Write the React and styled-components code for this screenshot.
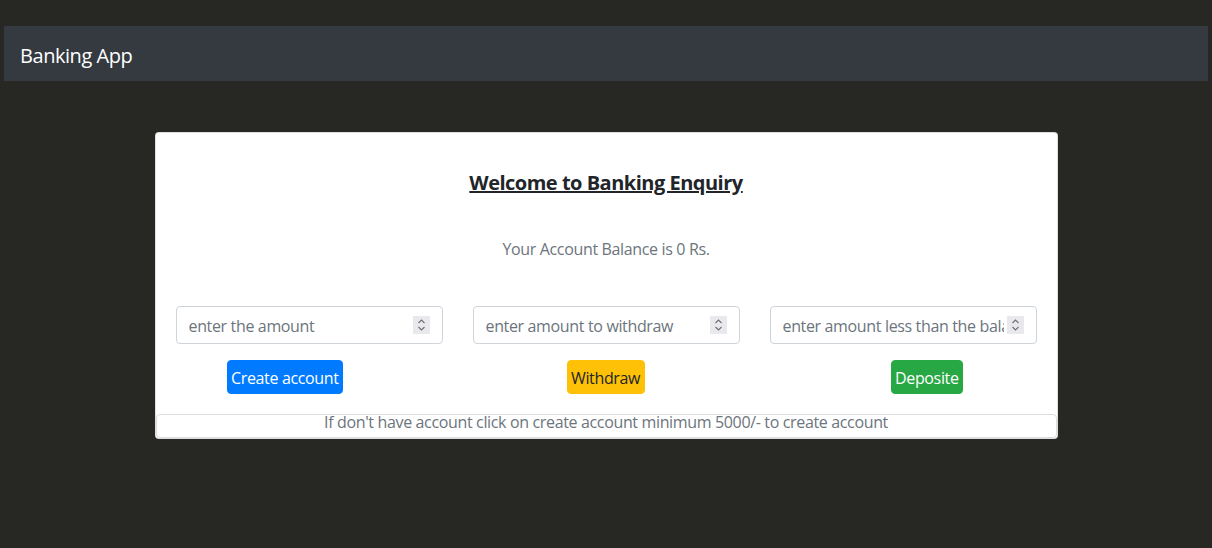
import React from 'react';
import styled, { createGlobalStyle } from 'styled-components';

const GlobalStyle = createGlobalStyle`
  html, body {
    margin: 0;
    padding: 0;
    background: #272723;
    font-family: 'Open Sans', 'Noto Sans', sans-serif;
    letter-spacing: -0.35px;
  }
  * {
    box-sizing: border-box;
  }
`;

const Page = styled.div`
  min-height: 548px;
  padding: 26px 4px 0;
`;

const Navbar = styled.nav`
  display: flex;
  align-items: center;
  height: 55px;
  padding: 4px 16px 0;
  background: #343a40;
`;

const Brand = styled.span`
  color: #ffffff;
  font-size: 20px;
  line-height: 30px;
  letter-spacing: -0.45px;
`;

const Card = styled.div`
  width: 903px;
  margin: 51px auto 0;
  background: #ffffff;
  border: 1px solid rgba(0, 0, 0, 0.125);
  border-radius: 4px;
  overflow: hidden;
`;

const CardBody = styled.div`
  padding: 38px 20px 0;
  text-align: center;
`;

const Title = styled.h5`
  margin: 0;
  font-size: 20px;
  font-weight: 700;
  line-height: 24px;
  letter-spacing: -0.5px;
  color: #212529;
  text-decoration: underline;
`;

const Balance = styled.p`
  margin: 42px 0 0;
  font-size: 16px;
  line-height: 24px;
  color: #6c757d;
`;

const Row = styled.div`
  display: grid;
  grid-template-columns: repeat(3, 1fr);
  column-gap: 30px;
  margin-top: 45px;
`;

const Column = styled.div`
  display: flex;
  flex-direction: column;
  align-items: flex-start;
`;

const Field = styled.div`
  position: relative;
  width: 100%;
`;

const Input = styled.input`
  width: 100%;
  height: 38px;
  padding: 7px 32px 5px 12px;
  border: 1px solid #ced4da;
  border-radius: 4px;
  font-family: inherit;
  font-size: 16px;
  letter-spacing: -0.35px;
  color: #495057;
  outline: none;
  &::placeholder {
    color: #6c757d;
  }
`;

const Spinner = styled.span`
  position: absolute;
  top: 10px;
  right: 13px;
  width: 17px;
  height: 18px;
  display: flex;
  align-items: center;
  justify-content: center;
  background: #e9e9ed;
`;

const ActionButton = styled.button`
  margin: 16px 0 0 ${(p) => p.$offset}px;
  height: 34px;
  padding: 1px 3.5px 0;
  border: 1px solid ${(p) => p.$bg};
  border-radius: 4px;
  background: ${(p) => p.$bg};
  color: ${(p) => p.$fg};
  font-family: inherit;
  font-size: 16px;
  line-height: 24px;
  letter-spacing: -0.35px;
  cursor: pointer;
`;

const Footer = styled.div`
  margin-top: 20px;
  height: 24px;
  border: 1px solid #dcdcdc;
  border-radius: 4px;
  text-align: center;
  font-size: 16px;
  line-height: 15px;
  color: #6c757d;
`;

function SpinIcon() {
  return (
    <svg width="9" height="14" viewBox="0 0 9 14" fill="none" stroke="#6e6e73" strokeWidth="1.1">
      <path d="M1.5 5 L4.5 2 L7.5 5" />
      <path d="M1.5 9 L4.5 12 L7.5 9" />
    </svg>
  );
}

const actions = [
  { placeholder: 'enter the amount', label: 'Create account', bg: '#007bff', fg: '#ffffff', offset: 51 },
  { placeholder: 'enter amount to withdraw', label: 'Withdraw', bg: '#ffc107', fg: '#212529', offset: 94 },
  { placeholder: 'enter amount less than the balance', label: 'Deposite', bg: '#28a745', fg: '#ffffff', offset: 121 },
];

export default function App() {
  return (
    <Page>
      <GlobalStyle />
      <Navbar>
        <Brand>Banking App</Brand>
      </Navbar>
      <Card>
        <CardBody>
          <Title>Welcome to Banking Enquiry</Title>
          <Balance>Your Account Balance is 0 Rs.</Balance>
          <Row>
            {actions.map((a) => (
              <Column key={a.label}>
                <Field>
                  <Input type="text" placeholder={a.placeholder} />
                  <Spinner>
                    <SpinIcon />
                  </Spinner>
                </Field>
                <ActionButton $bg={a.bg} $fg={a.fg} $offset={a.offset}>
                  {a.label}
                </ActionButton>
              </Column>
            ))}
          </Row>
        </CardBody>
        <Footer>If don't have account click on create account minimum 5000/- to create account</Footer>
      </Card>
    </Page>
  );
}
